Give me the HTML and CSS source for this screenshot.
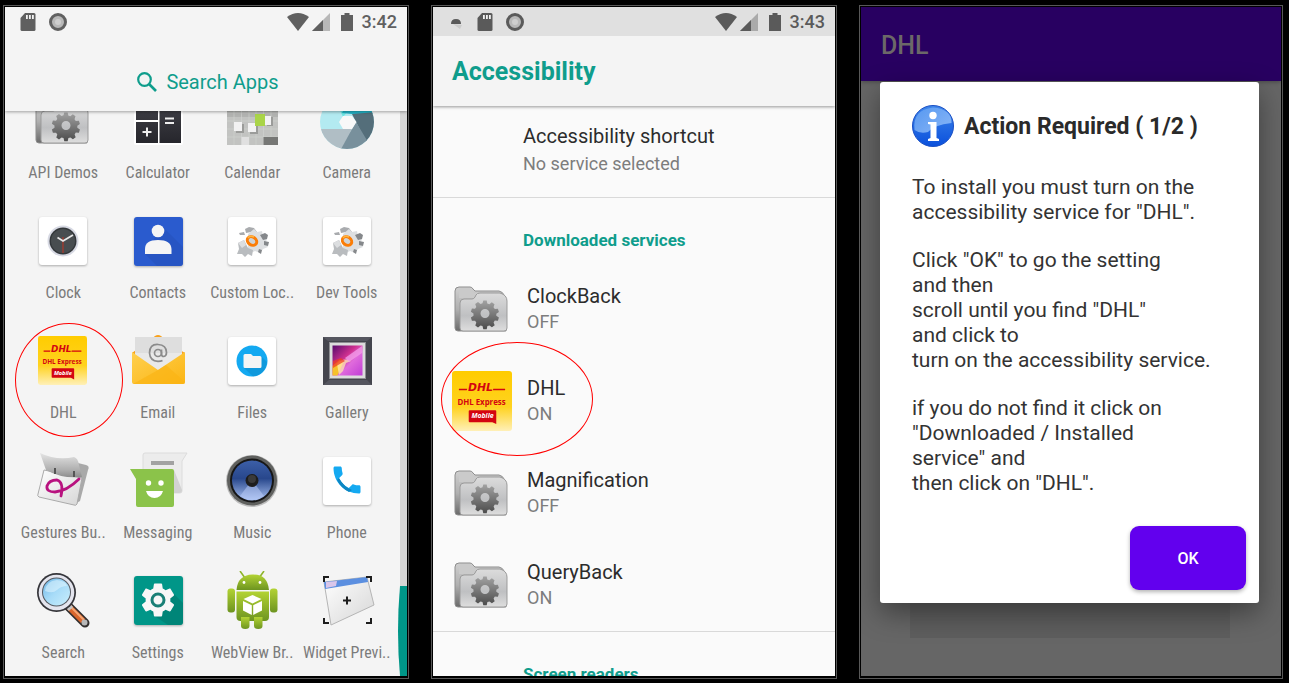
FILE: index.html
```html
<!DOCTYPE html>
<html lang="en">
<head>
  <meta charset="UTF-8" />
  <meta name="viewport" content="width=device-width, initial-scale=1.0"/>
  <title>DHL - Accessibility setup</title>
  <link rel="stylesheet" href="styles.css">
</head>
<body>
  <!-- Shared icons and gradients -->
  <svg class="defs" width="0" height="0" aria-hidden="true">
    <defs>
      <linearGradient id="g-folder" x1="0" y1="0" x2="0" y2="1"><stop offset="0" stop-color="#dcdcdc"/><stop offset=".6" stop-color="#bfc0c2"/><stop offset="1" stop-color="#dedede"/></linearGradient>
      <linearGradient id="g-back" x1="0" y1="0" x2="0" y2="1"><stop offset="0" stop-color="#cfcfcf"/><stop offset=".5" stop-color="#b0b0b0"/><stop offset="1" stop-color="#6a6a6a"/></linearGradient>
      <linearGradient id="g-gear" x1="0" y1="0" x2="0" y2="1"><stop offset="0" stop-color="#a2a2a2"/><stop offset="1" stop-color="#4c4c4c"/></linearGradient>
      <linearGradient id="g-dhl" x1="0" y1="0" x2="0" y2="1"><stop offset="0" stop-color="#ffcc00"/><stop offset=".6" stop-color="#ffd21f"/><stop offset="1" stop-color="#fff0b8"/></linearGradient>
      <linearGradient id="g-dark" x1="0" y1="0" x2="0" y2="1"><stop offset="0" stop-color="#43434a"/><stop offset="1" stop-color="#26262c"/></linearGradient>
      <linearGradient id="g-mail" x1="0" y1="0" x2="1" y2="1"><stop offset="0" stop-color="#ffd04f"/><stop offset="1" stop-color="#fbb514"/></linearGradient>
      <linearGradient id="g-pic" x1="0" y1="0" x2="1" y2="1"><stop offset="0" stop-color="#560a6c"/><stop offset=".4" stop-color="#cd2f8f"/><stop offset=".6" stop-color="#e06bdc"/><stop offset="1" stop-color="#c03ed6"/></linearGradient>
      <linearGradient id="g-pad" x1="0" y1="0" x2="1" y2="1"><stop offset="0" stop-color="#ffffff"/><stop offset="1" stop-color="#d6d6d6"/></linearGradient>
      <linearGradient id="g-cover" x1="0" y1="0" x2="0" y2="1"><stop offset="0" stop-color="#e4e4e4"/><stop offset=".7" stop-color="#aeaeae"/><stop offset="1" stop-color="#8c8c8c"/></linearGradient>
      <linearGradient id="g-speaker" x1="0" y1="0" x2="0" y2="1"><stop offset="0" stop-color="#3c5fa8"/><stop offset=".45" stop-color="#28478c"/><stop offset="1" stop-color="#a9c1f2"/></linearGradient>
      <linearGradient id="g-lens" x1="0" y1="0" x2="1" y2="1"><stop offset="0" stop-color="#6fb6e6"/><stop offset=".5" stop-color="#a8dcf8"/><stop offset="1" stop-color="#c9eefc"/></linearGradient>
      <linearGradient id="g-droid" x1="0" y1="0" x2="0" y2="1"><stop offset="0" stop-color="#b3d334"/><stop offset="1" stop-color="#6d9420"/></linearGradient>
      <linearGradient id="g-info" x1="0" y1="0" x2="0" y2="1"><stop offset="0" stop-color="#3f86ea"/><stop offset="1" stop-color="#0a50dc"/></linearGradient>
      <linearGradient id="g-gloss" x1="0" y1="0" x2="1" y2="1"><stop offset="0" stop-color="#5b9cf2"/><stop offset="1" stop-color="#9cc4fa"/></linearGradient>

      <symbol id="i-folder" viewBox="0 0 60 60">
        <path d="M3 12q0-4 4-4h11q2 0 3 2l2 2h24q4 1 5 4l2 5v31H6q-3 0-3-3z" fill="url(#g-back)" stroke="#8d8d8d"/>
        <path d="M7 12q0-3 3-3h8l4 5h24q4 1 4 5H7z" fill="#cacaca"/>
        <path d="M8 24q0-4 4-4h8q2 0 3-2l1-2q1-2 4-2h20q7 2 7 8v27q0 3-3 3H11q-3 0-3-3z" fill="url(#g-folder)" stroke="#9b9b9b"/>
        <path fill="url(#g-gear)" fill-rule="evenodd" d="M31.3 21.500h3.400l.6 3.100 2 .7 2.500-2 2.700 2-1 2.900 1.300 1.700 3.100-.2 1 3.300-2.600 1.800v2l2.600 1.600-1 3.300-3.100-.1-1.200 1.800 1.100 2.900-2.800 2-2.400-1.900-2.100.6-.7 3.200h-3.400l-.8-3.100-2-.7-2.500 2-2.700-2 1-3-1.200-1.700-3.200.1-1-3.200 2.600-1.800v-2.200l-2.600-1.800 1-3.200 3.100.1 1.300-1.700-1.100-3 2.800-1.900 2.500 1.900 2-.7zM33 30a4.500 4.500 0 1 0 0 9 4.500 4.500 0 0 0 0-9z"/>
      </symbol>

      <symbol id="i-dhl" viewBox="0 0 61 61">
        <rect width="61" height="61" rx="3" fill="url(#g-dhl)"/>
        <path d="M7 18h8.500l-.5 1.500H7zM42 18h12v1.500H41.500z" fill="#d40511"/>
        <text class="dhl-logo" x="29" y="20">DHL</text>
        <text class="dhl-express" x="30" y="35">DHL Express</text>
        <path d="M18 40h26q1 0 1 1v13l-4-2H18q-1 0-1-1V41q0-1 1-1z" fill="#d40511"/>
        <text class="dhl-mobile" x="31" y="48">Mobile</text>
      </symbol>

      <symbol id="i-sd" viewBox="0 0 16 18">
        <path d="M5 0h9q1.500 0 1.500 1.500v15q0 1.500-1.500 1.500H2Q.5 18 .5 16.500V5z" fill="currentColor"/>
        <path d="M6 2h1.800v4H6zM9 2h1.800v4H9zM12 2h1.800v4H12z" fill="#f4f4f4"/>
      </symbol>
      <symbol id="i-ring" viewBox="0 0 18 18">
        <circle cx="9" cy="9" r="7.500" fill="#b8b8b8" stroke="currentColor" stroke-width="3"/>
        <circle cx="9" cy="9" r="3" fill="#cecece"/>
      </symbol>
      <symbol id="i-wifi" viewBox="0 0 22 18"><path d="M0 4Q11-4 22 4L11 18z" fill="currentColor"/></symbol>
      <symbol id="i-signal" viewBox="0 0 18 18">
        <path d="M18 0v18H0z" fill="currentColor" opacity=".4"/><path d="M11 7v11H0z" fill="currentColor"/>
      </symbol>
      <symbol id="i-battery" viewBox="0 0 12 18"><path d="M3.500 0h5v2H12v16H0V2h3.500z" fill="currentColor"/></symbol>

      <symbol id="i-devtools" viewBox="0 0 60 60">
        <rect class="card-shape" x="6" y="6" width="48" height="48" rx="3" fill="#fff"/>
        <path d="M23 18l4-2 5 1 3 4-2 3-4-3-5 1zM17 22l5-1 1 3-5 0z" fill="#a9abae"/>
        <path d="M26 23l6-5 3 3 5-1 1 5 4 2-1 5 2 4-5 2-3 4-5-2-4 2-3-4z" fill="#dddfe1"/>
        <path d="M38 24l5-2 3 2-1 4-4 1zM42 30l5 1-1 4-4-1zM37 38l3 1-1 4-3-2z" fill="#85888b"/>
        <path d="M16 32l6-3 4 8 5 2-1 6-4-2-3 3-3-3h-5l2-5z" fill="#b9bcbf"/>
        <path d="M16 32l6-3 2 5-4 3z" fill="#dcdee0"/>
        <ellipse cx="30" cy="30" rx="5" ry="4" transform="rotate(35 30 30)" fill="#cfd3d6" stroke="#fb7d07" stroke-width="3"/>
        <path d="M26 27q2-3 6-1" stroke="#ffb53d" stroke-width="1.500" fill="none"/>
      </symbol>
    </defs>
  </svg>

  <main class="phones">

    <!-- App drawer -->
    <section class="phone">
      <div class="screen drawer">
        <header class="drawer-head">
          <div class="status">
            <svg width="16" height="18"><use href="#i-sd"/></svg>
            <svg width="18" height="18"><use href="#i-ring"/></svg>
            <span class="status-right">
              <svg width="22" height="18"><use href="#i-wifi"/></svg>
              <svg width="18" height="18"><use href="#i-signal"/></svg>
              <svg class="battery" width="12" height="18"><use href="#i-battery"/></svg>
              <time>3:42</time>
            </span>
          </div>
          <button class="search-apps" type="button">
            <svg width="20" height="20" viewBox="0 0 20 20"><circle cx="7.500" cy="7.500" r="6.300" fill="none" stroke="currentColor" stroke-width="2.200"/><path d="M12 12l7 7" stroke="currentColor" stroke-width="2.600"/></svg>
            Search Apps
          </button>
        </header>
        <div class="drawer-body">
          <nav class="apps">
            <a class="app" href="#"><svg viewBox="0 0 60 60"><use href="#i-folder"/></svg><span>API Demos</span></a>
            <a class="app" href="#">
              <svg viewBox="0 0 60 60">
                <rect x="6" y="4" width="49" height="50" rx="2" fill="#fff"/>
                <path d="M8 8h22v21H8zM8 31h22v21H8zM31.500 8H53v44H31.500z" fill="url(#g-dark)"/>
                <path d="M14.500 41h9M19 36.500v9M37 27.500h9M37 32h9" stroke="#eee" stroke-width="2"/>
              </svg><span>Calculator</span></a>
            <a class="app" href="#">
              <svg viewBox="0 0 60 60">
                <path d="M5 6h51v48H5z" fill="#c2c3c1"/>
                <path d="M5 6h51v20H5z" fill="#b2b3b1"/>
                <path d="M5 13.500h51M5 22h51M5 30h51M5 38h51M5 46h51M12 6v48M19.500 6v48M27 6v48M34 6v48M41.500 6v48M49 6v48" stroke="#d2d3d1" stroke-width=".6"/>
                <path d="M41.500 46H56v8H41.500z" fill="#767775"/><path d="M19.500 46H27v8h-7.500z" fill="#e0e0e0"/>
                <path d="M14 33h8v9h-8zM28 34h8v9h-8zM45 26h6v9h-6z" fill="#9b9c9a"/>
                <path d="M12 31h8v9h-8zM26 32h8v9h-8zM43 25h6v9h-6z" fill="#f2f2f2"/>
                <path d="M33 23h10v12H33z" fill="#a9d448"/>
              </svg><span>Calendar</span></a>
            <a class="app" href="#">
              <svg viewBox="0 0 60 60">
                <clipPath id="lens"><circle cx="30" cy="31" r="27"/></clipPath>
                <g clip-path="url(#lens)">
                  <path d="M0 0h60v60H0z" fill="#b3eaf1"/>
                  <path d="M14 0h34L26 26z" fill="#6de8e6"/>
                  <path d="M30 12L60 8v15H35L25 22z" fill="#22b5c9"/>
                  <path d="M35 23l25-2v30H49l-10-20z" fill="#546e7a"/>
                  <path d="M39 31l12 20-2 9H20l15-22z" fill="#78909c"/>
                  <path d="M0 38h35L23 60H0z" fill="#b0bec5"/>
                </g>
                <path d="M22 31l4-6h9l4.500 6-4.500 7h-9z" fill="#f8f8f8"/>
              </svg><span>Camera</span></a>

            <a class="app" href="#">
              <svg viewBox="0 0 60 60">
                <rect class="card-shape" x="6" y="6" width="48" height="48" rx="3" fill="#fff"/>
                <circle cx="30" cy="30" r="15.500" fill="#d8dae4"/><circle cx="30" cy="30" r="13.500" fill="#33373a"/><circle cx="30" cy="30" r="12" fill="#484d50"/>
                <path d="M30 26v16" stroke="#a8392c" stroke-width="1.300"/>
                <path d="M24.500 26.500L30 30l10-6" fill="none" stroke="#e8e8e8" stroke-width="1.800"/>
              </svg><span>Clock</span></a>
            <a class="app" href="#">
              <svg viewBox="0 0 60 60">
                <rect class="card-shape" x="6" y="6" width="49" height="49" rx="3" fill="#2a5bce"/>
                <path d="M34 15l21 21v16q0 3-3 3H29L17 43z" fill="#2350b8" opacity=".5"/>
                <circle cx="30" cy="20" r="6.300" fill="#f5f5f5"/>
                <path d="M17 43v-5q0-9 13-9t13.500 9v5z" fill="#f5f5f5"/>
              </svg><span>Contacts</span></a>
            <a class="app" href="#"><svg viewBox="0 0 60 60"><use href="#i-devtools"/></svg><span>Custom Loc..</span></a>
            <a class="app" href="#"><svg viewBox="0 0 60 60"><use href="#i-devtools"/></svg><span>Dev Tools</span></a>

            <a class="app marked" href="#"><svg viewBox="0 0 60 60"><use href="#i-dhl" x="5" y="5" width="49" height="49"/></svg><span>DHL</span></a>
            <a class="app" href="#">
              <svg viewBox="0 0 60 60">
                <path d="M24 8q6-8 12 0zM4 22l4-3h44l5 3v8H4z" fill="#f9a11b"/>
                <rect x="7" y="6" width="47" height="38" rx="2" fill="#e9e9e9"/>
                <path d="M7 6h47v16H7z" fill="#dedede"/>
                <path d="M4 21l26 18 27-18v30q0 2-2 2H6q-2 0-2-2z" fill="url(#g-mail)"/>
                <path d="M5 53l25-14 8-5 19 17q0 2-2 2z" fill="#fbb414" opacity=".65"/>
                <circle cx="30" cy="22" r="3.500" fill="none" stroke="#8b8b8b" stroke-width="1.700"/>
                <path d="M33.500 18.500v4.500q0 2.500 2.300 2.500 2.700-.5 2.700-4 0-7.500-8.500-8T21.500 22q.5 8 8.500 8.300 3 0 4.500-.8" fill="none" stroke="#8b8b8b" stroke-width="1.700"/>
              </svg><span>Email</span></a>
            <a class="app" href="#">
              <svg viewBox="0 0 60 60">
                <rect class="card-shape" x="6" y="6" width="48" height="48" rx="3" fill="#fff"/>
                <circle cx="30" cy="30" r="15.500" fill="#14a9f1"/>
                <path d="M39 25l6 6q-2 13-14 14.500L22 37z" fill="#0d8fce" opacity=".6"/>
                <path d="M23 23h6l2 2h7q1.500 0 1.500 1.500v9q0 1.500-1.500 1.500H23q-1.500 0-1.500-1.500v-11Q21.500 23 23 23z" fill="#f5f5f5"/>
              </svg><span>Files</span></a>
            <a class="app" href="#">
              <svg viewBox="0 0 60 60">
                <path d="M6 6h49v48H6z" fill="#44454d"/><path d="M6 6h49l-5 4H11zM6 54l6-5h38l5 5z" fill="#55565f"/>
                <path d="M12 11h37v37H12z" fill="#8d8e92"/><path d="M13 12h35v35H13z" fill="#dcdcdc"/>
                <path d="M15.500 14.500h30v30h-30z" fill="url(#g-pic)"/>
                <path d="M15.500 44.500V35l7-6 4 2-6 13.500z" fill="#f6c12a"/>
                <path d="M20 33q6-7 14-3l-5 2-3 8-4 4z" fill="#ffe9b0" opacity=".75"/>
                <path d="M28 27L45 15v7L32 31z" fill="#f39be8" opacity=".8"/>
                <path d="M16 30l8-3 4 3-12 7z" fill="#ef3d23" opacity=".75"/>
              </svg><span>Gallery</span></a>

            <a class="app" href="#">
              <svg viewBox="0 0 60 60">
                <path d="M45 12l8 2q4 1 2 5L47 50l-5 3z" fill="#969696" opacity=".8"/>
                <path d="M11 19l38 8-5 26q-1 2-3 1L6 46q-2-1-1-3z" fill="url(#g-pad)" stroke="#aaa"/>
                <path d="M7 2q17 8 34 4 4 1 5 8l3 12q-20 2-36-7z" fill="url(#g-cover)"/>
                <path d="M22 17v6M41 20v6" stroke="#555" stroke-width="2"/>
                <path d="M46 28Q34 40 22 41q-9 0-8-6 2-6 10-6 7 2 4 16" fill="none" stroke="#b8127f" stroke-width="2.800" stroke-linecap="round"/>
              </svg><span>Gestures Bu..</span></a>
            <a class="app" href="#">
              <svg viewBox="0 0 60 60">
                <path d="M17 2h42l-5 8v30q0 2-2 2H17q-2 0-2-2V4q0-2 2-2z" fill="#ececec" stroke="#dcdcdc"/>
                <path d="M46 19l8 20q0 3-3 3h-5z" fill="#d2d2d2"/>
                <path d="M23 10h23v4H23z" fill="#a2a2a2"/>
                <path d="M2 18h42q2 0 2 2v34q0 2-2 2H10q-2 0-2-2V28z" fill="#8bc34a"/>
                <circle cx="20.500" cy="32" r="2.700" fill="#fff"/><circle cx="33" cy="32" r="2.700" fill="#fff"/>
                <path d="M18 40h17q-2 7-8.500 7T18 40z" fill="#fff"/>
              </svg><span>Messaging</span></a>
            <a class="app" href="#">
              <svg viewBox="0 0 60 60">
                <circle cx="30" cy="30" r="26" fill="#bdbdbd"/><circle cx="30" cy="29.500" r="25" fill="#5f605e"/><circle cx="30" cy="29.500" r="22" fill="#161616"/>
                <circle cx="30" cy="29.500" r="20" fill="url(#g-speaker)"/>
                <path d="M30 29L18 45q12 8 24 0z" fill="#bdd0fa" opacity=".5"/>
                <circle cx="30" cy="29.500" r="6.500" fill="#1d1d1d"/><circle cx="30" cy="28" r="4" fill="#3a3a3a"/>
              </svg><span>Music</span></a>
            <a class="app" href="#">
              <svg viewBox="0 0 60 60">
                <rect class="card-shape" x="6" y="6" width="48" height="48" rx="3" fill="#fff"/>
                <path transform="translate(12 11) scale(1.500)" d="M6.620 10.790c1.440 2.830 3.760 5.140 6.590 6.590l2.200-2.200c.27-.27.670-.36 1.020-.24 1.120.37 2.330.57 3.570.57.550 0 1 .45 1 1V20c0 .55-.45 1-1 1-9.390 0-17-7.610-17-17 0-.55.45-1 1-1h3.500c.55 0 1 .45 1 1 0 1.250.2 2.450.57 3.570.110.350.030.740-.25 1.020l-2.200 2.200z" fill="#14a9f1"/>
                <path d="M22 27q5 9 13 12l-3 2q-8-4-12-12z" fill="#0d86c2"/>
              </svg><span>Phone</span></a>

            <a class="app" href="#">
              <svg viewBox="0 0 60 60">
                <path d="M35 35l17 17" stroke="#33302f" stroke-width="9" stroke-linecap="round"/>
                <path d="M36 36l14 14" stroke="#d9662c" stroke-width="6"/><path d="M37 35l14 14" stroke="#f3a573" stroke-width="2"/>
                <circle cx="51.500" cy="51.500" r="3" fill="#b8b8b8"/>
                <path d="M34 34l4 4" stroke="#c6c6c6" stroke-width="6"/>
                <circle cx="23.500" cy="21.500" r="19.500" fill="#35353a"/><circle cx="23.500" cy="21.500" r="17.800" fill="#e4e5ee"/>
                <circle cx="23.500" cy="21" r="14.500" fill="#54585f"/><circle cx="23.500" cy="21" r="13.500" fill="url(#g-lens)"/>
                <path d="M12 20q1-10 12-11 9 1 10 6-6 0-10 4t-12 1z" fill="#e2f6ff" opacity=".55"/>
              </svg><span>Search</span></a>
            <a class="app" href="#">
              <svg viewBox="0 0 60 60">
                <rect class="card-shape" x="6" y="5" width="49" height="49" rx="3" fill="#009688"/>
                <path d="M46 23l9 9v19q0 3-3 3H40L22 42z" fill="#00796b" opacity=".55"/>
                <path transform="translate(10.200 9.200) scale(1.650)" d="M19.430 12.980c.04-.32.070-.64.070-.98s-.03-.66-.07-.98l2.110-1.650c.19-.15.240-.42.120-.64l-2-3.460c-.12-.22-.39-.3-.61-.22l-2.490 1c-.52-.4-1.080-.73-1.690-.98l-.38-2.650C14.460 2.180 14.250 2 14 2h-4c-.25 0-.46.180-.49.420l-.38 2.650c-.61.250-1.170.590-1.690.980l-2.490-1c-.23-.09-.49 0-.61.220l-2 3.460c-.13.220-.07.490.120.640l2.110 1.650c-.04.320-.07.650-.07.980s.03.660.070.980l-2.110 1.650c-.19.150-.24.420-.12.640l2 3.460c.120.220.390.300.610.220l2.490-1c.52.400 1.080.730 1.690.980l.38 2.650c.03.240.240.420.490.420h4c.25 0 .46-.18.490-.42l.38-2.650c.61-.25 1.170-.59 1.690-.98l2.490 1c.23.090.490 0 .61-.22l2-3.460c.12-.22.070-.49-.12-.64l-2.110-1.650z" fill="#f7f7f7"/>
                <circle cx="30" cy="29" r="6" fill="#f7f7f7" stroke="#1a7f76" stroke-width="3"/>
              </svg><span>Settings</span></a>
            <a class="app" href="#">
              <svg viewBox="0 0 60 60">
                <path d="M18 0l5 7M42 0l-5 7" stroke="#8fb52b" stroke-width="1.600"/>
                <g fill="url(#g-droid)">
                  <path d="M14.500 19q1-15 16-15.500T47 19z"/><path d="M14.500 20.500H47V46q0 4-4 4H18.500q-4 0-4-4z"/>
                  <rect x="5.500" y="17.500" width="7.500" height="24" rx="3"/><rect x="48" y="17.500" width="7.500" height="24" rx="3"/>
                  <path d="M19 46h8.500v9q0 3-4.200 3T19 55zM32 46h8.500v9q0 3-4.200 3T32 55z"/>
                </g>
                <circle cx="22" cy="11.500" r="1.400" fill="#fff"/><circle cx="38" cy="11.500" r="1.400" fill="#fff"/>
                <path d="M30.500 24l9 4-9 4.500-9-4.500zM21 30l8.800 4.200V44L21 39.500zM40 30l-8.800 4.200V44l8.800-4.500z" fill="#fff"/>
              </svg><span>WebView Br..</span></a>
            <a class="app" href="#">
              <svg viewBox="0 0 60 60">
                <path d="M7 11l43-5 7 28-43 20z" fill="url(#g-pad)" stroke="#b5b5b5"/>
                <path d="M7 11l43-5 1 5-43 7z" fill="#5b8fe0"/><path d="M9 11l11-1-1 5-10 2z" fill="#d9c6ea"/>
                <path d="M7 11V6h5M49 6h5v5M54 47v5h-5M12 52H7v-5M30 25.500v8M26 29.500h8" fill="none" stroke="#1d1d1d" stroke-width="2"/>
              </svg><span>Widget Previ..</span></a>
          </nav>
          <div class="track">
            <svg class="thumb" width="9" height="90" viewBox="0 0 9 90"><path d="M2 0h7v90H2Q-2 45 2 0z" fill="#009688"/></svg>
          </div>
        </div>
      </div>
    </section>

    <!-- Accessibility settings -->
    <section class="phone">
      <div class="screen settings">
        <header class="settings-head">
          <div class="status status-grey">
            <svg width="16" height="18" viewBox="-2 0 16 18"><path d="M3 11l7 5 2-4z" fill="#ccc"/><path d="M1 11q0-5 5-5t5 5z" fill="currentColor"/></svg>
            <svg width="16" height="18"><use href="#i-sd"/></svg>
            <svg width="18" height="18"><use href="#i-ring"/></svg>
            <span class="status-right">
              <svg width="22" height="18"><use href="#i-wifi"/></svg>
              <svg width="18" height="18"><use href="#i-signal"/></svg>
              <svg class="battery" width="12" height="18"><use href="#i-battery"/></svg>
              <time>3:43</time>
            </span>
          </div>
          <h1>Accessibility</h1>
        </header>
        <a class="shortcut" href="#">
          <strong>Accessibility shortcut</strong>
          <small>No service selected</small>
        </a>
        <h2>Downloaded services</h2>
        <ul class="services">
          <li><a class="service" href="#"><svg viewBox="0 0 60 60"><use href="#i-folder"/></svg><span><strong>ClockBack</strong><small>OFF</small></span></a></li>
          <li><a class="service marked" href="#"><svg viewBox="0 0 60 60"><use href="#i-dhl"/></svg><span><strong>DHL</strong><small>ON</small></span></a></li>
          <li><a class="service" href="#"><svg viewBox="0 0 60 60"><use href="#i-folder"/></svg><span><strong>Magnification</strong><small>OFF</small></span></a></li>
          <li><a class="service" href="#"><svg viewBox="0 0 60 60"><use href="#i-folder"/></svg><span><strong>QueryBack</strong><small>ON</small></span></a></li>
        </ul>
        <h2>Screen readers</h2>
      </div>
    </section>

    <!-- DHL app with the permission dialog -->
    <section class="phone">
      <div class="screen dhl-app">
        <header class="appbar">DHL</header>
        <div class="webview"></div>
        <div class="dialog" role="dialog" aria-labelledby="dialog-title">
          <div class="dialog-title">
            <svg width="42" height="42" viewBox="0 0 42 42">
              <circle cx="21" cy="21" r="20.500" fill="url(#g-info)" stroke="#1a4fc4"/>
              <path d="M2.500 25Q0 5 21 2.500 40 4 39.500 18 22 20 16 27 8 29 2.500 25z" fill="url(#g-gloss)" opacity=".85"/>
              <circle cx="21" cy="10.500" r="3.700" fill="#fff"/>
              <path d="M16 17h8.500v16l2.500 1v2H16v-2l2.500-1V19.500L16 19z" fill="#fff"/>
            </svg>
            <h2 id="dialog-title">Action Required ( 1/2 )</h2>
          </div>
          <p>To install you must turn on the<br>accessibility service for "DHL".</p>
          <p>Click "OK" to go the setting<br>and then<br>scroll until you find "DHL"<br>and click to<br>turn on the accessibility service.</p>
          <p>if you do not find it click on<br>"Downloaded / Installed<br>service" and<br>then click on "DHL".</p>
          <button class="ok-btn" type="button">OK</button>
        </div>
      </div>
    </section>

  </main>
</body>
</html>
```
FILE: styles.css
```css
*{margin:0;padding:0;box-sizing:border-box}
body{font-family:Roboto,"Liberation Sans",sans-serif;background:#000;color:#222}
a{color:inherit;text-decoration:none}
button{font-family:inherit;border:none;cursor:pointer}
ul{list-style:none}
svg{display:block;flex:none}
.defs{position:absolute}

.phones{display:grid;grid-template-columns:406fr 406fr 424fr;gap:22px;height:100vh;padding:5px 6px 4px 3px}
.phone{display:flex;min-height:0;border:1px solid #585858;padding:1px 1px 2px}
.screen{flex:1;min-width:0;display:flex;flex-direction:column;overflow:hidden;position:relative}

/* status bar */
.status{display:flex;align-items:center;gap:13px;height:29px;padding:0 10px 0 15px;color:#606060}
.status-right{display:flex;align-items:center;gap:3px;margin-left:auto}
.status-right .battery{margin:0 6px 0 8px}
.status time{font-size:18px;font-weight:500}
.status-grey{background:#e0e0e0;color:#5a5a5a}

/* app drawer */
.drawer{background:#f4f4f4}
.drawer-head{background:#f4f4f4;box-shadow:0 1px 3px rgba(0,0,0,.35);z-index:1}
.search-apps{display:flex;align-items:center;justify-content:center;gap:9px;width:100%;height:75px;padding:16px 0 0 4px;background:none;color:#0f9d8c;font-size:20px}
.drawer-body{flex:1;min-height:0;display:flex;overflow:hidden}
.apps{flex:1;display:grid;grid-template-columns:repeat(4,1fr);grid-auto-rows:92px;gap:28px 0;margin-top:-20px;padding:0 6px 0 11px}
.app{display:flex;flex-direction:column;align-items:center;gap:12px;position:relative;min-width:0}
.app>svg{width:60px;height:60px}
.app span{font-family:"Roboto Condensed",Roboto,sans-serif;font-size:16px;line-height:20px;color:#7b7b7b;white-space:nowrap}
.card-shape{filter:drop-shadow(0 1px 1px rgba(0,0,0,.3))}
.track{flex:none;width:7px;display:flex;align-items:flex-end;justify-content:flex-end;background:#d6d6d6}
.dhl-logo{font:italic 700 11px "DejaVu Sans",sans-serif;fill:#d40511;text-anchor:middle}
.dhl-express{font:700 8px "Open Sans",sans-serif;fill:#d40511;text-anchor:middle}
.dhl-mobile{font:italic 700 7px "Open Sans",sans-serif;fill:#fff;text-anchor:middle}

/* red marker rings */
.marked{position:relative}
.marked::after{content:"";position:absolute;border:1px solid #f00;border-radius:50%;z-index:2}
.app.marked::after{left:-1px;top:-8px;width:106px;height:112px}
.service.marked::after{left:8px;top:-13px;width:150px;height:112px}

/* accessibility settings */
.settings{background:#fafafa}
.settings>*{flex:none}
.settings-head{background:#f4f4f4;box-shadow:0 1px 3px rgba(0,0,0,.4);z-index:1}
.settings h1{font-size:25px;font-weight:700;line-height:68px;padding:2px 0 0 19px;color:#0f9d8c}
.settings h2{font-size:17px;font-weight:700;line-height:24px;padding:30px 20px 11px 90px;color:#0f9d8c}
.settings strong{display:block;font-size:20px;font-weight:400;color:#2c2c2c}
.settings small{display:block;font-size:18px;color:#7d7d7d}
.shortcut{padding:16px 20px 19px 90px;line-height:28px;border-bottom:1px solid #d9d9d9}
.services{border-bottom:1px solid #d9d9d9}
.service{display:flex;align-items:center;gap:15px;height:92px;padding-left:19px;line-height:26px}
.service>svg{width:60px;height:60px}

/* dimmed app and dialog */
.dhl-app{background:#666}
.appbar{flex:none;padding:3px 20px 0;font-size:25px;font-weight:500;line-height:71px;background:#280061;color:#6c6868;box-shadow:0 1px 4px rgba(0,0,0,.3)}
.webview{flex:1;margin:0 51px 38px 49px;background:#5e5e5e}
.dialog{position:absolute;top:75px;left:19px;right:22px;display:flex;flex-direction:column;padding:23px 13px 13px 32px;background:#fff;border-radius:3px;box-shadow:0 10px 28px rgba(0,0,0,.4)}
.dialog-title{display:flex;align-items:center;gap:10px;margin-bottom:28px}
.dialog h2{font-size:23px;font-weight:700;color:#2a2a2a}
.dialog p{font-size:21px;line-height:25px;margin-bottom:23px;color:#333}
.ok-btn{align-self:flex-end;width:116px;height:64px;margin-top:7px;border-radius:9px;background:#6200ee;color:#fff;font-size:16px;font-weight:500;box-shadow:0 2px 4px rgba(0,0,0,.3)}
```
